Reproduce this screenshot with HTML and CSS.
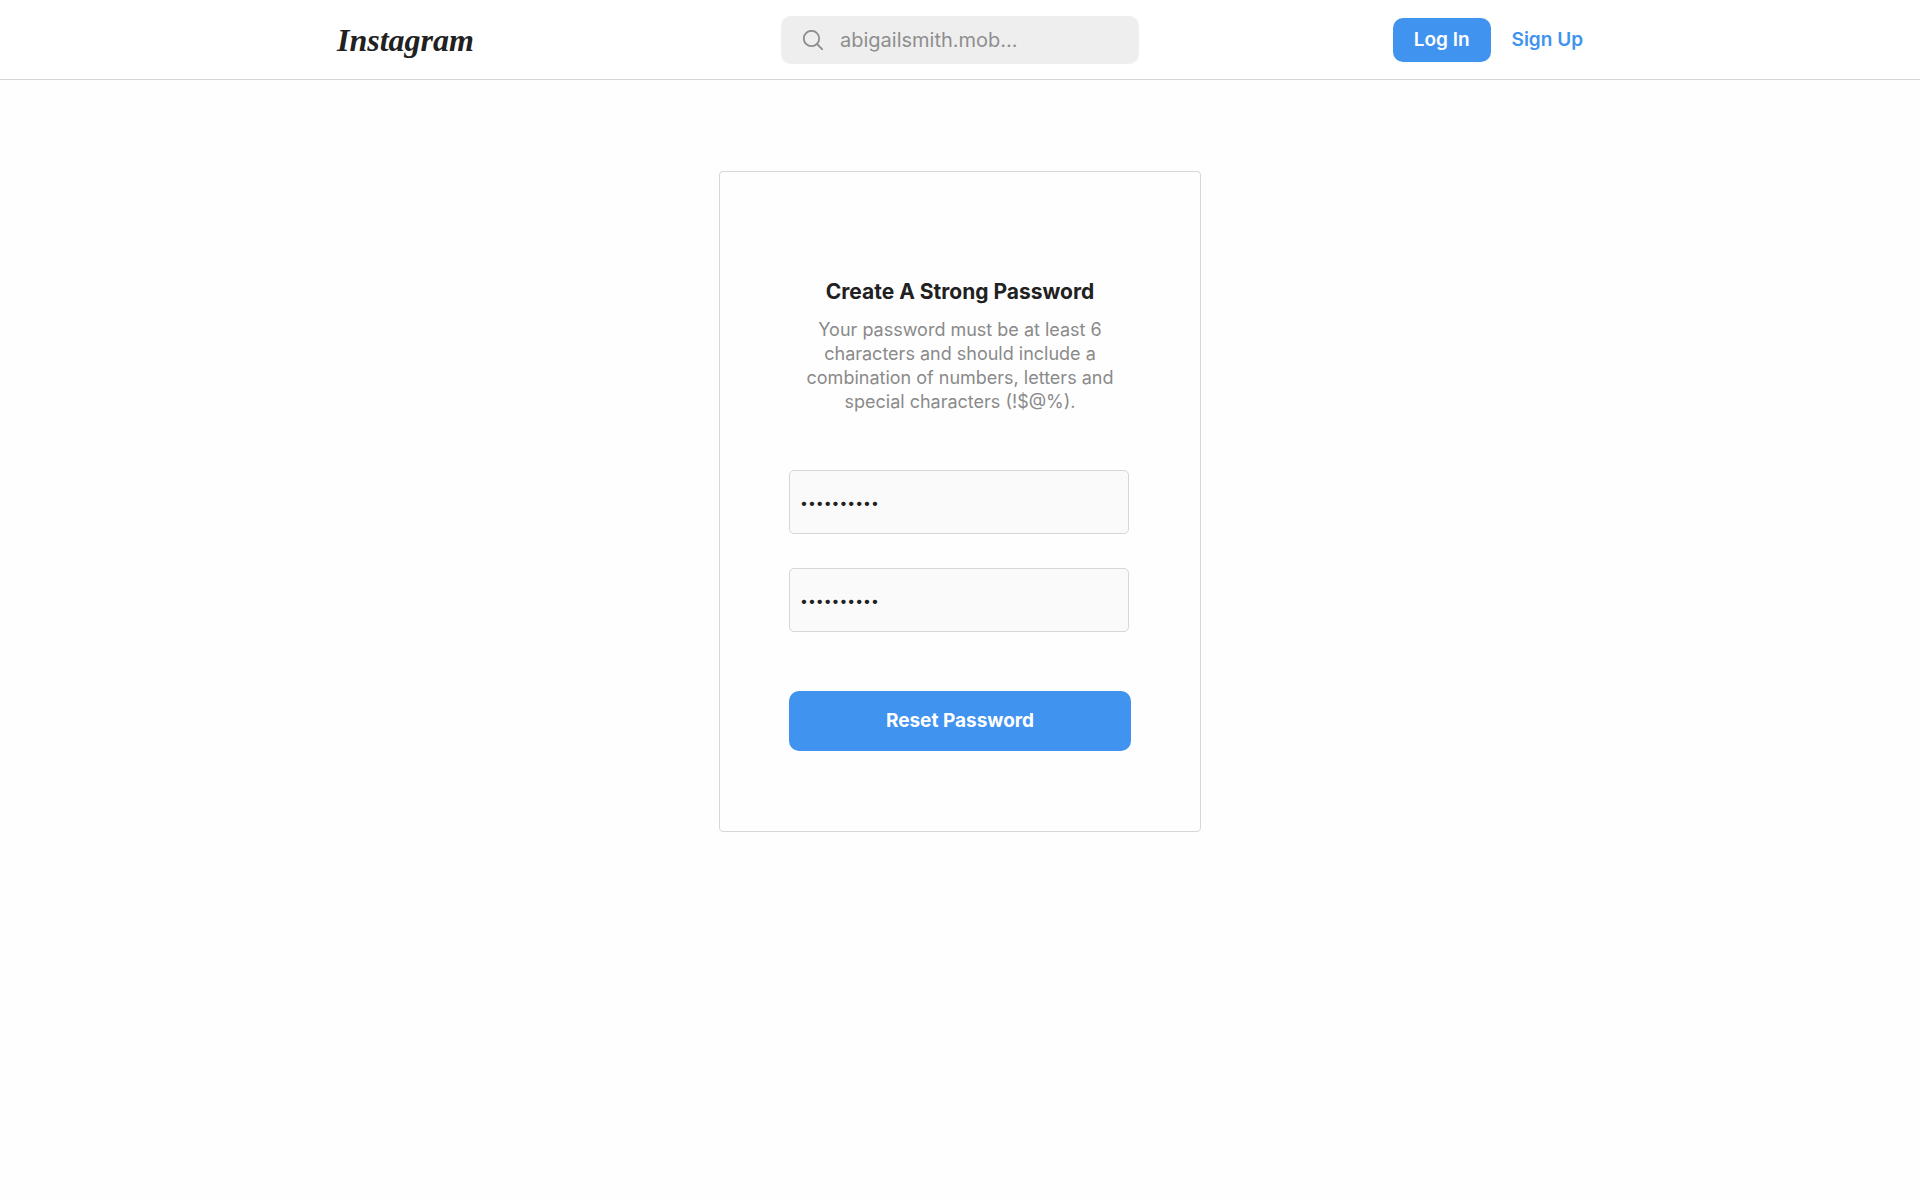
FILE: index.html
```
<!DOCTYPE html>
<html lang="en">

<head>
    <meta charset="UTF-8">
    <meta name="viewport" content="width=device-width, initial-scale=1.0">
    <title>Reset Password • Instagram</title>
    <link rel="stylesheet" href="styles.css">
</head>

<body>
    <header class="site-header">
        <div class="header-inner">
            <a class="logo" href="#">Instagram</a>
            <label class="search">
                <svg class="search-icon" viewBox="0 0 20 20" aria-hidden="true">
                    <circle cx="8.5" cy="8.5" r="7.7"></circle>
                    <path d="M14 14l5.3 5.3"></path>
                </svg>
                <input type="text" placeholder="abigailsmith.mob..." aria-label="Search">
            </label>
            <nav class="account">
                <button class="btn btn-login" type="button">Log In</button>
                <a class="signup" href="#">Sign Up</a>
            </nav>
        </div>
    </header>

    <main class="page">
        <form class="card">
            <h1>Create A Strong Password</h1>
            <p>Your password must be at least 6 characters and should include a combination of numbers, letters and special characters (!$@%).</p>
            <input class="field" type="password" value="abigail123" aria-label="New password">
            <input class="field" type="password" value="abigail123" aria-label="New password, again">
            <button class="btn btn-reset" type="button">Reset Password</button>
        </form>
    </main>
</body>

</html>
```
FILE: styles.css
```
* {
    box-sizing: border-box;
}

body {
    margin: 0;
    font-family: Inter, "Liberation Sans", sans-serif;
    font-size: 19px;
    line-height: 24px;
    color: #212121;
    background-color: #fefefe;
}

/* Header */
.site-header {
    background-color: #fff;
    border-bottom: 1px solid #d6d6d6;
}

.header-inner {
    display: grid;
    grid-template-columns: 1fr 358px 1fr;
    align-items: center;
    max-width: 1246px;
    margin: 0 auto;
    padding: 16px 0 15px;
}

.logo {
    justify-self: start;
    font-family: "Liberation Serif", serif;
    font-size: 32px;
    font-style: italic;
    font-weight: bold;
    line-height: 48px;
    color: #212121;
    text-decoration: none;
}

.search {
    display: flex;
    align-items: center;
    gap: 17px;
    height: 48px;
    padding: 0 22px;
    background-color: #eee;
    border-radius: 10px;
}

.search-icon {
    flex: none;
    width: 20px;
    height: 20px;
    fill: none;
    stroke: #8e8e8e;
    stroke-width: 1.8;
    stroke-linecap: round;
}

.search input {
    flex: 1;
    min-width: 0;
    padding: 0;
    border: 0;
    outline: 0;
    background: none;
    font-family: inherit;
    font-size: 20px;
}

.search input::placeholder {
    color: #8e8e8e;
    opacity: 1;
}

.account {
    display: flex;
    align-items: center;
    justify-content: flex-end;
    gap: 21px;
}

.btn {
    border: 0;
    border-radius: 10px;
    background-color: #4093ef;
    font-family: inherit;
    font-size: 19px;
    font-weight: 600;
    line-height: 24px;
    color: #fff;
    cursor: pointer;
}

.btn-login {
    padding: 10px 21px;
}

.signup {
    font-weight: 600;
    color: #4093ef;
    text-decoration: none;
}

/* Password card */
.page {
    padding: 91px 20px;
}

.card {
    display: flex;
    flex-direction: column;
    max-width: 482px;
    margin: 0 auto;
    padding: 106px 69px 80px;
    border: 1px solid #d6d6d6;
    border-radius: 4px;
    text-align: center;
}

.card h1 {
    margin: 0 0 12px;
    font-size: 21px;
    font-weight: 700;
    line-height: 28px;
}

.card p {
    margin: 0 0 56px;
    padding: 0 10px;
    font-size: 18px;
    color: #8a8a8a;
}

.field {
    height: 64px;
    margin: 0 2px 34px 0;
    padding: 0 10px;
    border: 1px solid #d6d6d6;
    border-radius: 5px;
    outline: 0;
    background-color: #fafafa;
    font-family: inherit;
    font-size: 14px;
    color: #212121;
}

.btn-reset {
    margin-top: 25px;
    padding: 18px;
    font-weight: 700;
}
```
